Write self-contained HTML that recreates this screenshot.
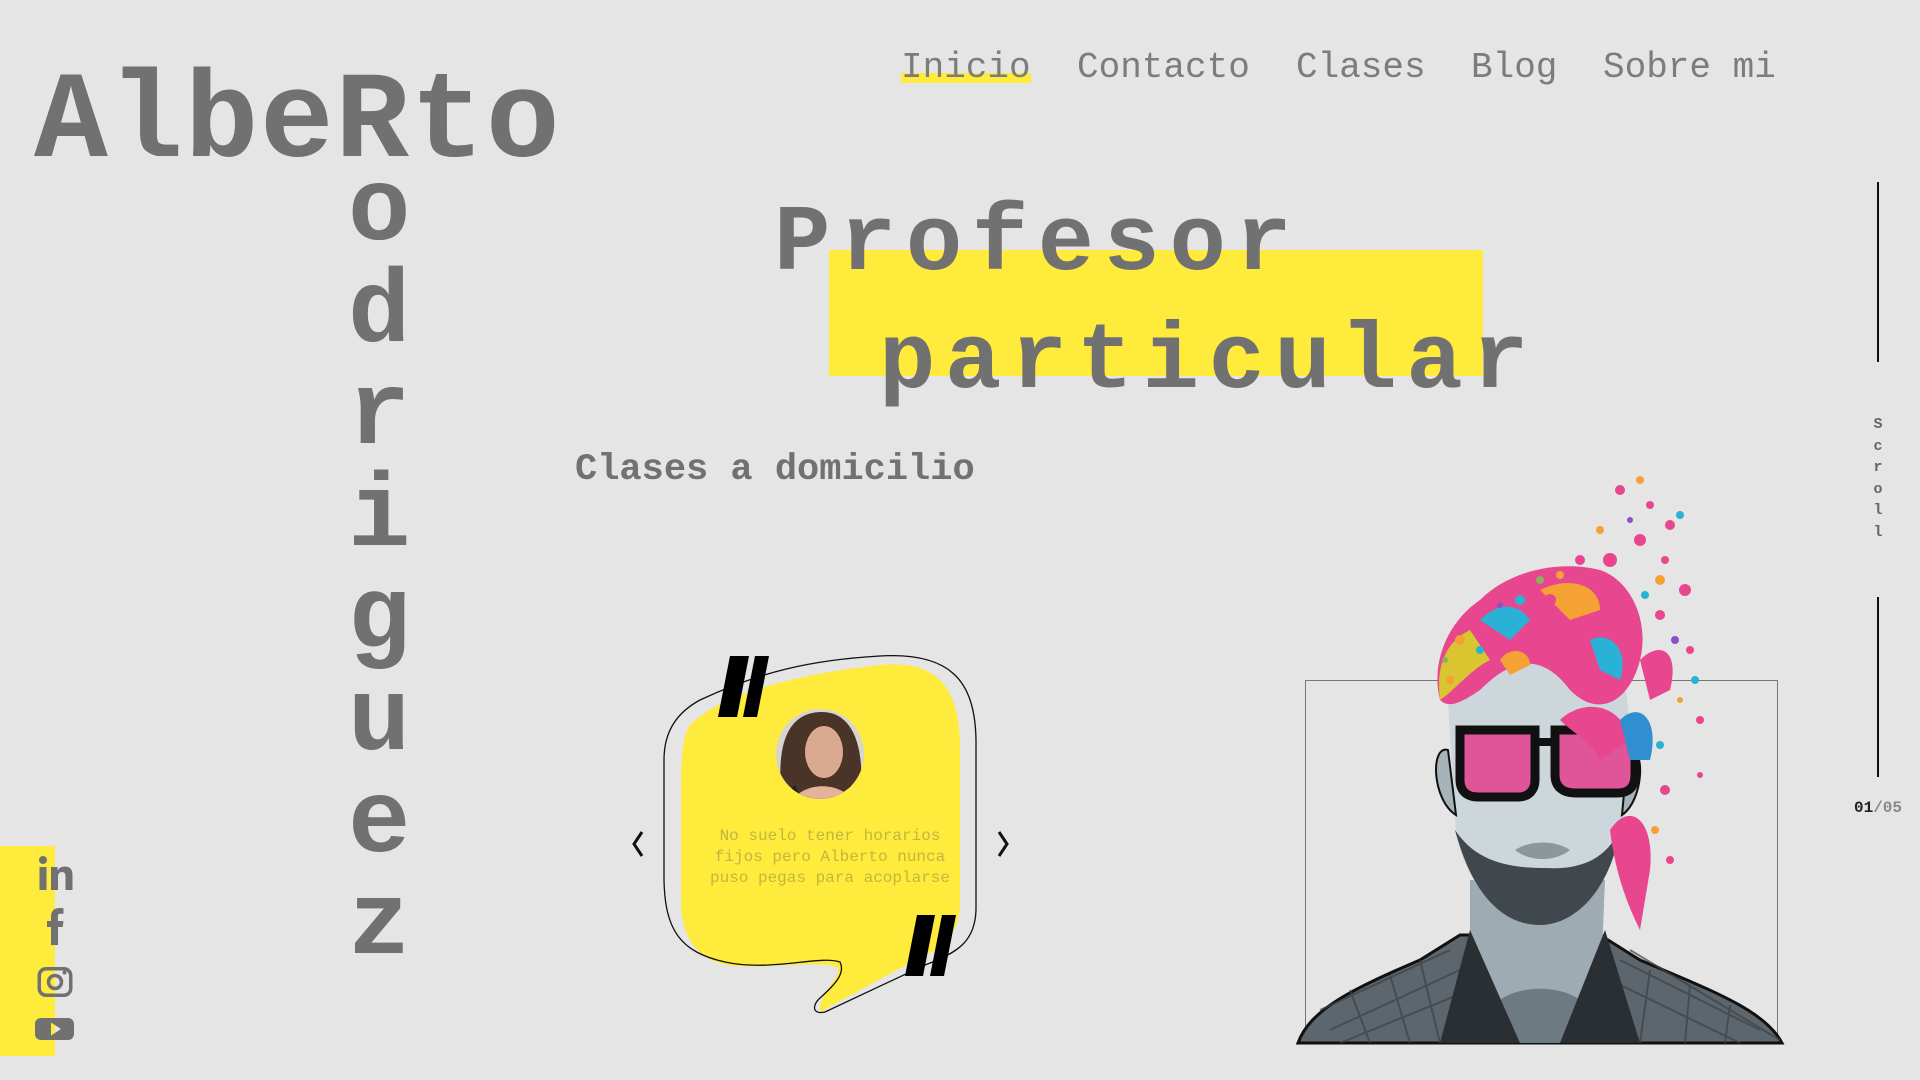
<!DOCTYPE html>
<html><head><meta charset="utf-8"><style>
*{margin:0;padding:0;box-sizing:border-box}
body{width:1920px;height:1080px;background:#e5e5e5;position:relative;overflow:hidden;font-family:"Liberation Mono",monospace;color:#717171}
.a{position:absolute;white-space:nowrap}
.logo{left:34px;top:62px;font-size:123px;line-height:1;font-weight:bold;letter-spacing:1.5px}
.vert{left:348px;top:161px;font-size:104px;line-height:102px;font-weight:bold;width:62px;text-align:center}
.nav{top:50px;font-size:36px;line-height:1;color:#7c7c7c}
.h{font-size:94px;line-height:1;font-weight:bold;letter-spacing:9.5px}
.sub{left:575px;top:452px;font-size:37px;line-height:1;font-weight:bold}
.y{background:#ffeb3b}
</style></head><body>
<div class="a y" style="left:901px;top:73px;width:130px;height:10px"></div>
<div class="a nav" style="left:901px">Inicio</div>
<div class="a nav" style="left:1077px">Contacto</div>
<div class="a nav" style="left:1296px">Clases</div>
<div class="a nav" style="left:1471px">Blog</div>
<div class="a nav" style="left:1603px">Sobre mi</div>

<div class="a logo">AlbeRto</div>
<div class="a vert">o<br>d<br>r<br>i<br>g<br>u<br>e<br>z</div>

<div class="a y" style="left:829px;top:250px;width:654px;height:126px"></div>
<div class="a h" style="left:774px;top:198px">Profesor</div>
<div class="a h" style="left:879px;top:316px">particular</div>
<div class="a sub">Clases a domicilio</div>

<!-- scroll -->
<div class="a" style="left:1877px;top:182px;width:2px;height:180px;background:#111"></div>
<div class="a" style="left:1870px;top:414px;width:16px;font-size:15px;line-height:21.5px;text-align:center;color:#666;font-weight:bold">S<br>c<br>r<br>o<br>l<br>l</div>
<div class="a" style="left:1877px;top:597px;width:2px;height:180px;background:#111"></div>
<div class="a" style="left:1854px;top:799px;font-size:16px;font-weight:bold;color:#888"><span style="color:#222">01</span>/05</div>

<!-- social -->
<div class="a y" style="left:0;top:846px;width:55px;height:210px"></div>
<svg class="a" style="left:30px;top:850px" width="50" height="200" viewBox="0 0 50 200">
<g fill="#717171">
<circle cx="13" cy="10" r="4"/><rect x="9.5" y="17" width="7" height="23"/>
<path d="M21 17h6.5v3.5c1.5-2.6 4-4 7.5-4 5 0 7.5 3 7.5 8.5V40h-7V26.5c0-3-1-4.5-3.5-4.5s-4 1.7-4 4.8V40H21z"/>
<path d="M21 95V77h-4v-6h4v-4c0-6 3-9 8.5-9 2 0 3.5.2 4 .3v5.5h-3c-2.2 0-2.6 1-2.6 2.6V71h5.6l-.8 6H28v18z"/>
<path d="M16 117h18a8.5 8.5 0 0 1 8.5 8.5v13a8.5 8.5 0 0 1-8.5 8.5H16a8.5 8.5 0 0 1-8.5-8.5v-13A8.5 8.5 0 0 1 16 117zm0 3.5a5 5 0 0 0-5 5v13a5 5 0 0 0 5 5h18a5 5 0 0 0 5-5v-13a5 5 0 0 0-5-5z" fill-rule="evenodd"/>
<circle cx="25" cy="132" r="6.5" fill="none" stroke="#717171" stroke-width="3.5"/>
<circle cx="34.5" cy="122.5" r="2"/>
<path d="M11 168h27c3.5 0 6 2.5 6 6v10c0 3.5-2.5 6-6 6H11c-3.5 0-6-2.5-6-6v-10c0-3.5 2.5-6 6-6zM21 172.5v13l10-6.5z" fill-rule="evenodd"/>
</g></svg>

<!-- testimonial -->
<svg class="a" style="left:620px;top:640px" width="400" height="390" viewBox="620 640 400 390">
<path d="M690 725 C720 695 790 675 880 665 C935 660 958 685 960 740 L960 905 C958 935 945 948 915 960 L820 1012 C818 995 840 980 838 968 C825 960 770 968 735 966 C695 962 681 935 681 900 L681 790 C681 755 683 735 690 725Z" fill="#ffeb3b"/>
<path d="M700 700 C760 672 810 660 880 656 C950 652 975 680 976 740 L976 910 C975 940 960 952 925 965 L825 1012 C812 1015 812 1005 820 998 C838 982 845 972 840 962 C820 955 770 972 725 962 C680 952 665 930 664 880 L664 760 C664 730 678 712 700 700Z" fill="none" stroke="#111" stroke-width="1.3"/>
<path d="M718 717 L730 656 L749 656 L737 717Z M743 717 L755 656 L769 656 L757 717Z" fill="#000"/>
<path d="M905 976 L917 915 L935 915 L923 976Z M930 976 L942 915 L956 915 L944 976Z" fill="#000"/>
<path d="M642 832 L634 844 L642 856" fill="none" stroke="#111" stroke-width="3"/>
<path d="M999 832 L1007 844 L999 856" fill="none" stroke="#111" stroke-width="3"/>
<defs><clipPath id="av"><ellipse cx="820" cy="754" rx="44" ry="45"/></clipPath></defs>
<g clip-path="url(#av)">
<rect x="770" y="705" width="100" height="100" fill="#d8d4cf"/>
<path d="M782 800 C775 740 790 712 822 712 C852 712 866 745 860 800Z" fill="#4a3428"/>
<ellipse cx="824" cy="752" rx="19" ry="26" fill="#d9a88f"/>
<path d="M790 805 C800 780 845 780 855 805Z" fill="#e2b29c"/>
<path d="M775 805 L795 785 L805 805Z M868 805 L850 785 L840 805Z" fill="#222"/>
</g>
<g font-family="Liberation Mono, monospace" font-size="16" fill="#c3b640" text-anchor="middle">
<text x="830" y="840">No suelo tener horarios</text>
<text x="830" y="861">fijos pero Alberto nunca</text>
<text x="830" y="882">puso pegas para acoplarse</text>
</g>
</svg>

<!-- portrait -->
<svg class="a" style="left:1290px;top:470px" width="500" height="580" viewBox="1290 470 500 580">
<rect x="1305.5" y="680.5" width="472" height="362" fill="none" stroke="#777" stroke-width="1"/>
<path d="M1298 1043 C1310 1010 1350 990 1420 960 L1460 935 L1600 935 L1640 960 C1710 990 1765 1010 1782 1043Z" fill="#5d666d" stroke="#111" stroke-width="3"/>
<g stroke="#3b4247" stroke-width="2" opacity=".7">
<path d="M1320 1010 L1450 950 M1330 1030 L1460 970 M1340 1043 L1470 990 M1620 960 L1760 1030 M1610 980 L1740 1043 M1630 950 L1780 1040"/>
<path d="M1350 990 L1370 1043 M1390 975 L1410 1043 M1420 960 L1440 1043 M1650 970 L1640 1043 M1690 985 L1685 1043 M1730 1005 L1725 1043"/>
</g>
<path d="M1470 880 L1470 1000 L1600 1000 L1605 880Z" fill="#9eabb2"/>
<path d="M1500 1000 C1520 985 1560 985 1580 1000 L1580 1043 L1500 1043Z" fill="#6e7a81"/>
<path d="M1440 1043 L1470 930 L1520 1043Z M1640 1043 L1605 930 L1560 1043Z" fill="#2a2f33"/>
<path d="M1448 700 C1450 650 1490 630 1540 630 C1595 630 1630 660 1628 720 L1622 820 C1615 880 1575 918 1540 920 C1495 918 1460 880 1455 820Z" fill="#cdd7db"/>
<path d="M1455 830 C1475 905 1510 925 1540 925 C1575 925 1610 890 1620 830 C1605 860 1580 870 1545 868 C1505 868 1475 860 1455 830Z" fill="#40484d"/>
<path d="M1515 850 C1530 840 1555 840 1570 850 C1555 862 1530 862 1515 850Z" fill="#8b979d"/>
<path d="M1448 750 C1430 745 1432 800 1456 815Z M1628 750 C1646 745 1644 800 1622 815Z" fill="#a7b3b9" stroke="#111" stroke-width="2"/>
<path d="M1460 730 h75 v50 c0 10 -6 17 -17 17 h-40 c-12 0 -18 -7 -18 -17z M1555 730 h80 v45 c0 12 -6 18 -18 18 h-42 c-12 0 -20 -6 -20 -18z" fill="#e0559a" stroke="#111" stroke-width="9"/>
<path d="M1535 742 h20" stroke="#111" stroke-width="8"/>
<g>
<path d="M1440 700 C1430 660 1450 620 1480 600 C1510 570 1560 560 1600 570 C1630 580 1650 620 1640 660 C1630 700 1600 720 1570 690 C1540 650 1510 660 1480 690 C1465 700 1450 710 1440 700Z" fill="#e8468f"/>
<path d="M1440 700 C1435 660 1450 640 1470 630 L1490 660 C1470 670 1455 690 1440 700Z" fill="#d8c52f"/>
<path d="M1480 620 C1500 600 1520 605 1530 620 L1510 640Z" fill="#2ab1d6"/>
<path d="M1540 590 C1570 575 1600 585 1600 610 L1570 620Z" fill="#f5a235"/>
<path d="M1590 640 C1610 630 1630 650 1620 680 L1600 670Z" fill="#2ab1d6"/>
<path d="M1500 660 C1510 645 1530 650 1530 665 L1510 675Z" fill="#f5a235"/>
<path d="M1560 720 C1580 700 1620 700 1630 740 L1600 760 C1590 740 1575 735 1560 720Z" fill="#e8468f"/>
<path d="M1620 720 C1640 700 1660 720 1650 760 L1630 760Z" fill="#2f8fd0"/>
<path d="M1640 660 C1660 640 1680 650 1670 690 L1650 700Z" fill="#e8468f"/>
<path d="M1610 830 C1630 800 1655 820 1650 870 L1640 930 C1625 900 1615 870 1610 830Z" fill="#e8468f"/>
</g>
<g fill="#e8468f">
<circle cx="1620" cy="490" r="5"/><circle cx="1650" cy="505" r="4"/><circle cx="1670" cy="525" r="5"/><circle cx="1640" cy="540" r="6"/>
<circle cx="1610" cy="560" r="7"/><circle cx="1665" cy="560" r="4"/><circle cx="1685" cy="590" r="6"/><circle cx="1660" cy="615" r="5"/>
<circle cx="1580" cy="560" r="5"/><circle cx="1690" cy="650" r="4"/><circle cx="1700" cy="720" r="4"/><circle cx="1665" cy="790" r="5"/>
<circle cx="1670" cy="860" r="4"/><circle cx="1550" cy="600" r="6"/><circle cx="1700" cy="775" r="3"/>
</g>
<g fill="#f5a235">
<circle cx="1640" cy="480" r="4"/><circle cx="1660" cy="580" r="5"/><circle cx="1600" cy="530" r="4"/><circle cx="1560" cy="575" r="4"/>
<circle cx="1460" cy="640" r="5"/><circle cx="1450" cy="680" r="4"/><circle cx="1655" cy="830" r="4"/><circle cx="1680" cy="700" r="3"/>
</g>
<g fill="#2ab1d6">
<circle cx="1680" cy="515" r="4"/><circle cx="1520" cy="600" r="5"/><circle cx="1480" cy="650" r="4"/><circle cx="1695" cy="680" r="4"/>
<circle cx="1645" cy="595" r="4"/><circle cx="1660" cy="745" r="4"/><circle cx="1505" cy="620" r="3"/>
</g>
<g fill="#8a4fc9"><circle cx="1630" cy="520" r="3"/><circle cx="1675" cy="640" r="4"/><circle cx="1500" cy="605" r="3"/></g>
<g fill="#8fae60"><circle cx="1540" cy="580" r="4"/><circle cx="1445" cy="660" r="3"/></g>
</svg>
</body></html>
